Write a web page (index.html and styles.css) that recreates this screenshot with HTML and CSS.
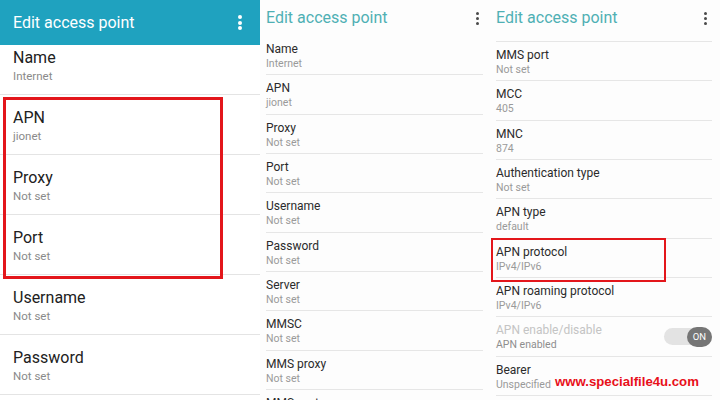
FILE: index.html
```html
<!DOCTYPE html>
<html>
<head>
<meta charset="utf-8">
<link rel="stylesheet" href="styles.css">
</head>
<body>
<div class="screen">
  <section class="panel p1">
    <header class="bar">
      <h1 class="title">Edit access point</h1>
      <span class="kebab"><i></i><i></i><i></i></span>
    </header>
    <div class="list">
      <div class="row first"><div class="t">Name</div><div class="s">Internet</div></div>
      <div class="group hl">
        <div class="row"><div class="t">APN</div><div class="s">jionet</div></div>
        <div class="row"><div class="t">Proxy</div><div class="s">Not set</div></div>
        <div class="row"><div class="t">Port</div><div class="s">Not set</div></div>
      </div>
      <div class="row"><div class="t">Username</div><div class="s">Not set</div></div>
      <div class="row"><div class="t">Password</div><div class="s">Not set</div></div>
    </div>
  </section>

  <section class="panel p2">
    <header class="bar">
      <h1 class="title">Edit access point</h1>
      <span class="kebab"><i></i><i></i><i></i></span>
    </header>
    <div class="list">
      <div class="row"><div class="t">Name</div><div class="s">Internet</div></div>
      <div class="row"><div class="t">APN</div><div class="s">jionet</div></div>
      <div class="row"><div class="t">Proxy</div><div class="s">Not set</div></div>
      <div class="row"><div class="t">Port</div><div class="s">Not set</div></div>
      <div class="row"><div class="t">Username</div><div class="s">Not set</div></div>
      <div class="row"><div class="t">Password</div><div class="s">Not set</div></div>
      <div class="row"><div class="t">Server</div><div class="s">Not set</div></div>
      <div class="row"><div class="t">MMSC</div><div class="s">Not set</div></div>
      <div class="row"><div class="t">MMS proxy</div><div class="s">Not set</div></div>
      <div class="row"><div class="t">MMS port</div><div class="s">Not set</div></div>
    </div>
  </section>

  <section class="panel p3">
    <header class="bar">
      <h1 class="title">Edit access point</h1>
      <span class="kebab"><i></i><i></i><i></i></span>
    </header>
    <div class="list">
      <div class="row"><div class="t">MMS port</div><div class="s">Not set</div></div>
      <div class="row"><div class="t">MCC</div><div class="s">405</div></div>
      <div class="row"><div class="t">MNC</div><div class="s">874</div></div>
      <div class="row"><div class="t">Authentication type</div><div class="s">Not set</div></div>
      <div class="row"><div class="t">APN type</div><div class="s">default</div></div>
      <div class="row hl"><div class="t">APN protocol</div><div class="s">IPv4/IPv6</div></div>
      <div class="row"><div class="t">APN roaming protocol</div><div class="s">IPv4/IPv6</div></div>
      <div class="row switch-row">
        <div class="txt"><div class="t disabled">APN enable/disable</div><div class="s">APN enabled</div></div>
        <div class="toggle"><span class="thumb">ON</span></div>
      </div>
      <div class="row"><div class="t">Bearer</div><div class="s">Unspecified</div></div>
    </div>
    <div class="watermark">www.specialfile4u.com</div>
  </section>
</div>
</body>
</html>
```

FILE: styles.css
```css
* { box-sizing: border-box; }
html, body { margin: 0; padding: 0; background: #ffffff; }
body { font-family: Roboto, "Noto Sans", sans-serif; }

.screen {
  display: flex;
  width: 720px;
  height: 400px;
  overflow: hidden;
}

.panel {
  flex: none;
  height: 400px;
  overflow: hidden;
  position: relative;
  background: #fff;
}
.p1 { width: 260px; }
.p2 { width: 228px; background: #fdfdfd; }
.p3 { width: 232px; background: #fdfdfd; }

.title { margin: 0; font-weight: 400; white-space: nowrap; }

.bar {
  display: flex;
  align-items: center;
  justify-content: space-between;
}

.kebab {
  display: flex;
  flex-direction: column;
  gap: 2px;
}
.kebab i {
  display: block;
  width: 3px;
  height: 3px;
  border-radius: 50%;
}

/* ---------- panel 1 ---------- */
.p1 .bar {
  height: 45px;
  background: #1fa2bf;
  padding: 0 18px 0 13px;
}
.p1 .title { color: #fff; font-size: 16px; line-height: 22px; }
.p1 .kebab i { background: #fff; width: 4px; height: 4px; }
.p1 .kebab { gap: 1.5px; }

.p1 .row {
  padding: 13px 0 10px 13px;
  border-bottom: 1px solid #e4e4e4;
}
.p1 .row.first { padding-top: 3px; }
.p1 .t { font-size: 16px; line-height: 20px; color: #212121; }
.p1 .s { font-size: 11.5px; line-height: 16px; color: #8a8a8a; }

.group { position: relative; }
.p1 .group.hl::after {
  content: "";
  position: absolute;
  left: 3px;
  top: 2px;
  width: 214px;
  height: 176px;
  border: 3px solid #e3161b;
}

/* ---------- panels 2 & 3 shared ---------- */
.p2 .title, .p3 .title { color: #4fb0b4; font-size: 16px; line-height: 24px; }
.p2 .kebab i, .p3 .kebab i { background: #4a4a4a; }

.p2 .row, .p3 .row {
  height: 39.33px;
  padding-top: 5px;
  border-bottom: 1px solid #e6e6e6;
}
.p2 .t, .p3 .t { font-size: 12px; line-height: 16px; color: #2b2b2b; }
.p2 .s, .p3 .s { font-size: 10.5px; line-height: 14px; color: #9a9a9a; }

/* ---------- panel 2 ---------- */
.p2 .bar { height: 36px; padding: 0 9px 0 6px; }
.p2 .list { padding: 0 5px 0 6px; }

/* ---------- panel 3 ---------- */
.p3 .bar {
  height: 42px;
  margin: 0 8px;
  align-items: flex-start;
  padding-top: 6px;
  border-bottom: 1px solid #e6e6e6;
}
.p3 .bar .kebab { margin-top: 6px; margin-right: 5px; }
.p3 .list { padding: 0 8px; }

.p3 .row.hl { position: relative; }
.p3 .row.hl::after {
  content: "";
  position: absolute;
  left: -5px;
  top: -1px;
  width: 171px;
  height: 40px;
  border: 2px solid #e3161b;
}

.switch-row {
  display: flex;
  align-items: flex-start;
  justify-content: space-between;
}
.p3 .t.disabled { color: #c4c4c4; }
.p3 .switch-row .s { color: #8e8e8e; }

.toggle {
  margin-top: 6px;
  width: 48px;
  height: 17px;
  border-radius: 9px;
  background: #e3e3e3;
  display: flex;
  justify-content: flex-end;
  align-items: center;
}
.thumb {
  width: 25px;
  height: 20px;
  border-radius: 10px;
  background: #767676;
  color: #fff;
  font-size: 9.5px;
  line-height: 20px;
  text-align: center;
}

.watermark {
  position: absolute;
  left: 67px;
  top: 373px;
  font-family: "Liberation Sans", Arial, sans-serif;
  font-weight: 700;
  font-size: 13.2px;
  line-height: 18px;
  color: #e8101a;
  white-space: nowrap;
}
```
